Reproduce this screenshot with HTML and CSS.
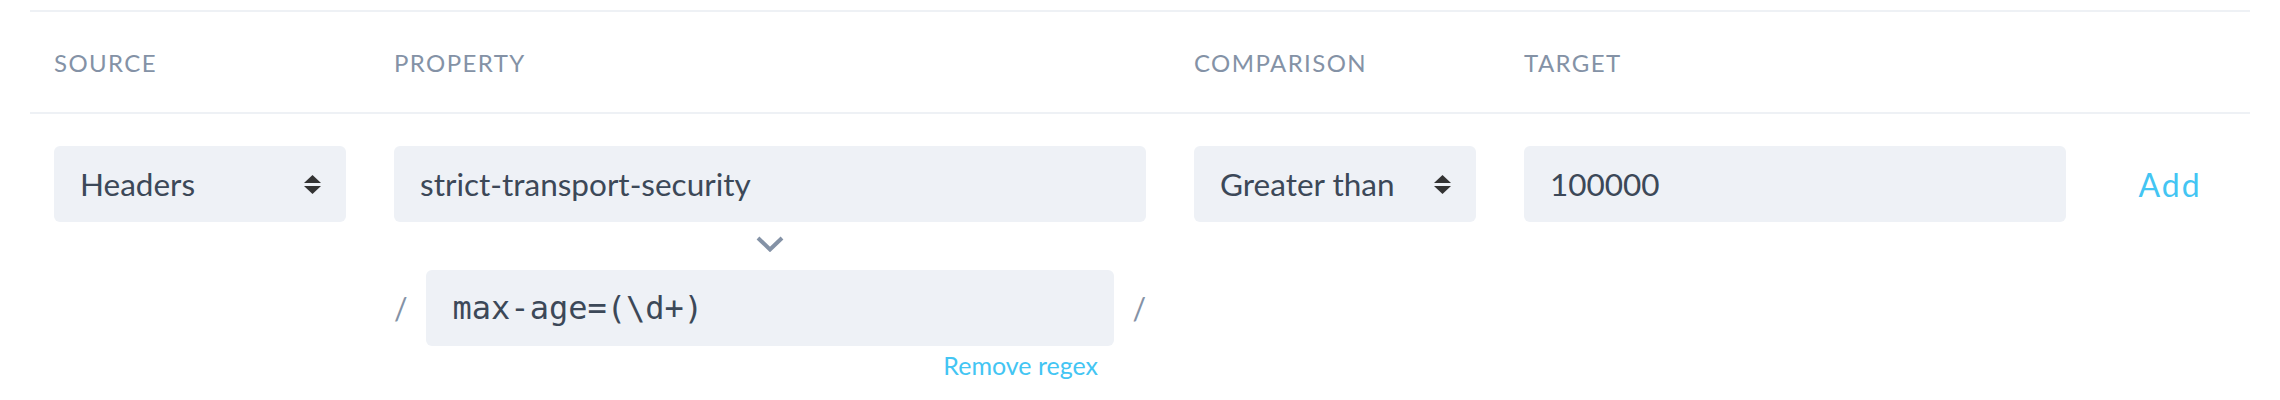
FILE: index.html
```html
<!DOCTYPE html>
<html>
<head>
<meta charset="utf-8">
<link rel="stylesheet" href="styles.css">
</head>
<body>
<div class="table">
  <div class="row head">
    <div class="cell"><span class="label">SOURCE</span></div>
    <div class="cell"><span class="label">PROPERTY</span></div>
    <div class="cell"><span class="label">COMPARISON</span></div>
    <div class="cell"><span class="label">TARGET</span></div>
    <div class="cell"></div>
  </div>
  <div class="row body">
    <div class="cell">
      <div class="field select">
        <span>Headers</span>
        <svg class="updown" width="17" height="19" viewBox="0 0 17 19"><polygon points="8.5,0 17,8 0,8"/><polygon points="0,11 17,11 8.5,19"/></svg>
      </div>
    </div>
    <div class="cell">
      <div class="field">strict-transport-security</div>
      <div class="chev"><svg width="28" height="16" viewBox="0 0 28 16"><polyline points="2,2 14,13.5 26,2"/></svg></div>
      <div class="regex-row">
        <span class="slash">/</span>
        <div class="field mono">max-age=(\d+)</div>
        <span class="slash">/</span>
      </div>
      <div class="remove"><span class="link small">Remove regex</span></div>
    </div>
    <div class="cell">
      <div class="field select">
        <span>Greater than</span>
        <svg class="updown" width="17" height="19" viewBox="0 0 17 19"><polygon points="8.5,0 17,8 0,8"/><polygon points="0,11 17,11 8.5,19"/></svg>
      </div>
    </div>
    <div class="cell">
      <div class="field">100000</div>
    </div>
    <div class="cell action">
      <span class="link add">Add</span>
    </div>
  </div>
</div>
</body>
</html>
```
FILE: styles.css
```css
html, body {
  margin: 0;
  padding: 0;
  background: #ffffff;
}
body {
  font-family: Lato, "Liberation Sans", sans-serif;
  color: #3c4858;
}
.table {
  margin: 10px 0 0 30px;
  width: 2220px;
  border-top: 2px solid #eef1f5;
}
.row {
  display: grid;
  grid-template-columns: 340px 800px 330px 590px 160px;
}
.head {
  height: 100px;
  border-bottom: 2px solid #eef1f5;
  align-items: center;
}
.cell {
  padding: 0 24px;
}
.label {
  font-size: 24px;
  letter-spacing: 1.4px;
  color: #8492a6;
}
.body {
  padding-top: 32px;
  align-items: start;
}
.field {
  height: 76px;
  box-sizing: border-box;
  background: #eef1f6;
  border-radius: 6px;
  padding: 0 26px;
  display: flex;
  align-items: center;
  font-size: 31.5px;
  color: #3c4858;
}
.select {
  justify-content: space-between;
  padding-right: 25px;
}
.updown polygon {
  fill: #333333;
}
.chev {
  display: flex;
  justify-content: center;
  margin-top: 14px;
  height: 16px;
}
.chev polyline {
  fill: none;
  stroke: #8492a6;
  stroke-width: 4;
}
.regex-row {
  display: flex;
  align-items: center;
  gap: 18px;
  margin-top: 18px;
}
.regex-row .field {
  flex: 1;
}
.slash {
  font-size: 30px;
  color: #8492a6;
}
.mono {
  font-family: "DejaVu Sans Mono", "Liberation Mono", monospace;
  font-size: 32px;
  padding-left: 27px;
}
.remove {
  display: flex;
  justify-content: flex-end;
  padding-right: 48px;
  margin-top: 4px;
}
.link {
  color: #43c5f3;
}
.small {
  font-size: 25px;
}
.action {
  display: flex;
  justify-content: center;
  height: 76px;
  align-items: center;
}
.add {
  font-size: 32px;
  letter-spacing: 2px;
}
```
